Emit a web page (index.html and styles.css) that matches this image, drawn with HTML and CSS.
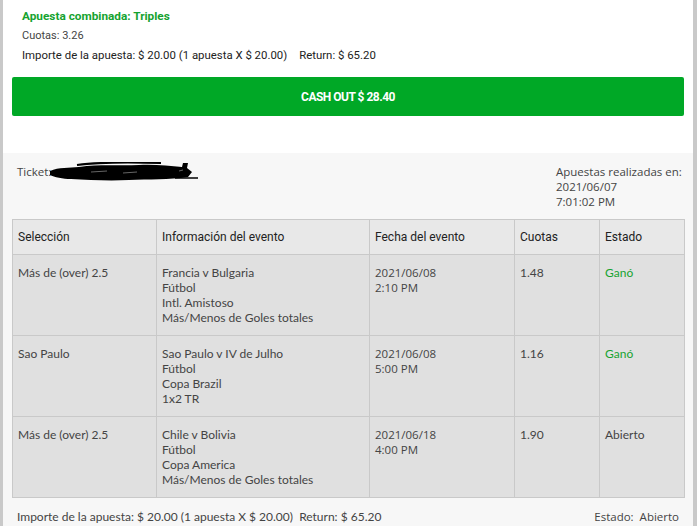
FILE: index.html
```html
<!DOCTYPE html>
<html lang="es">
<head>
    <meta charset="UTF-8">
    <meta name="viewport" content="width=device-width, initial-scale=1.0">
    <title>Apuesta combinada - Triples</title>
    <link rel="stylesheet" href="styles.css">
</head>
<body>
    <div class="panel">
        <div class="summary">
            <div class="bet-title">Apuesta combinada: Triples</div>
            <div class="bet-odds">Cuotas: 3.26</div>
            <div class="bet-stake">Importe de la apuesta: $ 20.00 (1 apuesta X $ 20.00)<span class="gap"></span>Return: $ 65.20</div>
        </div>

        <button class="btn-cashout">CASH OUT $ 28.40</button>

        <div class="ticket">
            <div class="ticket-head">
                <div class="ticket-id">
                    Ticket:
                    <svg class="redacted" width="150" height="20" viewBox="0 0 150 20">
                        <path d="M1 9 C10 5 20 6 30 5 C50 2 70 4 90 3 C105 2 120 4 133 5 L134 1 L139 1 L138 6 L143 10 L139 15 C120 18 100 17 80 18 C60 19 40 18 22 17 C14 17 5 15 1 13 Z" fill="#000"/>
                        <path d="M28 3 C50 0 80 0 112 1" stroke="#000" stroke-width="2" fill="none"/>
                        <path d="M126 16 L149 16" stroke="#000" stroke-width="1.5"/>
                        <path d="M42 10 L58 9 M74 11 L88 10 M130 9 L134 8" stroke="#666" stroke-width="1"/>
                    </svg>
                </div>
                <div class="placed">
                    Apuestas realizadas en:<br>
                    2021/06/07<br>
                    7:01:02 PM
                </div>
            </div>

            <table class="legs-table">
                <colgroup>
                    <col style="width: 144px">
                    <col style="width: 213px">
                    <col style="width: 145px">
                    <col style="width: 85px">
                    <col style="width: 85px">
                </colgroup>
                <thead>
                    <tr>
                        <th>Selección</th>
                        <th>Información del evento</th>
                        <th>Fecha del evento</th>
                        <th>Cuotas</th>
                        <th>Estado</th>
                    </tr>
                </thead>
                <tbody>
                    <tr>
                        <td>Más de (over) 2.5</td>
                        <td>Francia v Bulgaria<br>Fútbol<br>Intl. Amistoso<br>Más/Menos de Goles totales</td>
                        <td class="date">2021/06/08<br>2:10 PM</td>
                        <td>1.48</td>
                        <td class="status status-won">Ganó</td>
                    </tr>
                    <tr>
                        <td>Sao Paulo</td>
                        <td>Sao Paulo v IV de Julho<br>Fútbol<br>Copa Brazil<br>1x2 TR</td>
                        <td class="date">2021/06/08<br>5:00 PM</td>
                        <td>1.16</td>
                        <td class="status status-won">Ganó</td>
                    </tr>
                    <tr>
                        <td>Más de (over) 2.5</td>
                        <td>Chile v Bolivia<br>Fútbol<br>Copa America<br>Más/Menos de Goles totales</td>
                        <td class="date">2021/06/18<br>4:00 PM</td>
                        <td>1.90</td>
                        <td class="status">Abierto</td>
                    </tr>
                </tbody>
            </table>

            <div class="ticket-foot">
                <span>Importe de la apuesta: $ 20.00 (1 apuesta X $ 20.00)&nbsp; Return: $ 65.20</span>
                <span class="foot-status">Estado:&nbsp; Abierto</span>
            </div>
        </div>
    </div>
</body>
</html>
```

FILE: styles.css
```css
:root {
    --green: #00a826;
    --green-text: #16a330;
    --text-primary: #333;
    --text-secondary: #444;
    --border: #c9c9c9;
    --ticket-bg: #f7f7f7;
    --head-bg: #e8e8e8;
    --row-bg: #e0e0e0;
}

* {
    margin: 0;
    padding: 0;
    box-sizing: border-box;
}

body {
    font-family: 'Roboto', sans-serif;
    color: var(--text-primary);
    background-color: #fff;
}

.panel {
    min-height: 526px;
    border-left: 3px solid var(--border);
    border-right: 4px solid var(--border);
    background-color: #fff;
    display: flex;
    flex-direction: column;
}

.summary {
    padding: 6px 19px 0;
    font-size: 12px;
}

.bet-title {
    color: var(--green-text);
    font-weight: 700;
    font-size: 11.8px;
    line-height: 20px;
}

.bet-odds {
    font-size: 11px;
    line-height: 20px;
    color: #444;
}

.bet-stake {
    font-size: 11.4px;
    line-height: 19px;
    color: #222;
}

.gap {
    display: inline-block;
    width: 12px;
}

.btn-cashout {
    margin: 12px 9px 0;
    height: 39px;
    border: none;
    border-radius: 2px;
    background-color: var(--green);
    color: #fff;
    font-family: 'Roboto', sans-serif;
    font-weight: 700;
    font-size: 12px;
    letter-spacing: -0.5px;
    cursor: pointer;
}

.ticket {
    flex: 1;
    margin-top: 37px;
    background-color: var(--ticket-bg);
    padding-top: 11px;
}

.ticket-head {
    display: grid;
    grid-template-columns: 1fr 130px;
    padding: 0 7px 0 14px;
    font-family: 'Open Sans', sans-serif;
    font-size: 11.5px;
    line-height: 15px;
    color: var(--text-secondary);
}

.ticket-id {
    display: flex;
    align-items: flex-start;
}

.redacted {
    margin-left: -2px;
    margin-top: -2px;
}

.placed {
    color: var(--text-secondary);
}

.legs-table {
    margin: 10px 9px 0;
    width: 672px;
    table-layout: fixed;
    border-collapse: collapse;
    font-size: 12px;
}

.legs-table th,
.legs-table td {
    border: 1px solid var(--border);
    text-align: left;
}

.legs-table th {
    height: 35px;
    padding: 0 5px;
    background-color: var(--head-bg);
    font-weight: 400;
    color: #222;
    vertical-align: middle;
}

.legs-table td {
    height: 81px;
    padding: 10px 5px;
    background-color: var(--row-bg);
    font-family: 'Lato', sans-serif;
    line-height: 15px;
    color: var(--text-secondary);
    vertical-align: top;
}

.legs-table td.date {
    font-family: 'Open Sans', sans-serif;
    font-size: 11.5px;
}

.legs-table td.status-won {
    color: var(--green-text);
}

.ticket-foot {
    display: flex;
    justify-content: space-between;
    padding: 11px 14px 0;
    font-family: 'Lato', sans-serif;
    font-size: 12px;
    line-height: 15px;
    color: var(--text-secondary);
}

.foot-status {
    font-family: 'Open Sans', sans-serif;
    font-size: 11.5px;
}
```
